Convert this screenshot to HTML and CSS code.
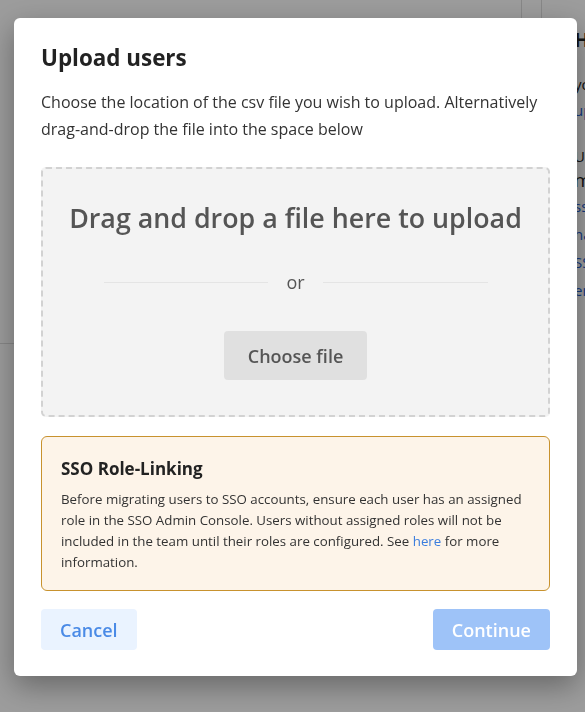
FILE: index.html
```html
<!DOCTYPE html>
<html lang="en">
<head>
<meta charset="UTF-8">
<meta name="viewport" content="width=device-width, initial-scale=1.0">
<title>Team members</title>
<link rel="stylesheet" href="styles.css">
</head>
<body>

<div class="page">
  <div class="panel panel-main"></div>
  <div class="panel panel-side">
    <h3 class="side-title">Help</h3>
    <p class="side-text">you need a template,</p>
    <a class="side-link" href="#">upload guide</a>
    <h4 class="side-sub">Useful links</h4>
    <p class="side-label">manage</p>
    <a class="side-link" href="#">sso setup</a>
    <a class="side-link" href="#">name rules</a>
    <a class="side-link" href="#">SSO console</a>
    <a class="side-link" href="#">errors</a>
  </div>
</div>

<div class="modal-overlay">
  <div class="modal">
    <h2 class="modal-title">Upload users</h2>
    <p class="modal-text">Choose the location of the csv file you wish to upload. Alternatively drag-and-drop the file into the space below</p>

    <div class="dropzone">
      <div class="dropzone-title">Drag and drop a file here to upload</div>
      <div class="divider">
        <span class="divider-line"></span>
        <span class="divider-text">or</span>
        <span class="divider-line"></span>
      </div>
      <button class="choose-button">Choose file</button>
    </div>

    <div class="notice">
      <div class="notice-title">SSO Role-Linking</div>
      <p class="notice-text">Before migrating users to SSO accounts, ensure each user has an assigned role in the SSO Admin Console. Users without assigned roles will not be included in the team until their roles are configured. See <a href="#">here</a> for more information.</p>
    </div>

    <div class="modal-footer">
      <button class="btn btn-cancel">Cancel</button>
      <button class="btn btn-continue" disabled>Continue</button>
    </div>
  </div>
</div>

</body>
</html>
```

FILE: styles.css
```css
body {
  margin: 0;
  font-family: "Open Sans", "Noto Sans", sans-serif;
  color: #222;
  background: #fff;
}

/* page behind the dialog */
.page {
  display: flex;
  align-items: flex-start;
  gap: 19px;
  height: 712px;
  overflow: hidden;
}

.panel-main {
  flex: 0 0 522px;
  height: 354px;
  margin-top: -10px;
  border-right: 1px solid #ddd;
  border-bottom: 1px solid #ddd;
  box-sizing: border-box;
}

.panel-side {
  flex: 0 0 300px;
  height: 330px;
  margin-top: -10px;
  padding: 36px 0 0 32px;
  border-left: 1px solid #ddd;
}

.side-title {
  margin: 0;
  font-size: 20px;
  line-height: 28px;
}

.side-text {
  margin: 18px 0 0;
  font-size: 15px;
  line-height: 24px;
}

.side-link {
  display: block;
  font-size: 15px;
  line-height: 28px;
  color: #1f5fd1;
  text-decoration: none;
}

.side-sub {
  margin: 20px 0 0;
  font-size: 15px;
  font-weight: 400;
  line-height: 24px;
}

.side-label {
  margin: 0;
  font-size: 19px;
  line-height: 24px;
}

/* dialog */
.modal-overlay {
  position: fixed;
  inset: 0;
  background: rgba(0, 0, 0, 0.39);
  display: flex;
  align-items: flex-start;
}

.modal {
  width: 563px;
  box-sizing: border-box;
  margin: 18px 0 0 14px;
  padding: 24px 27px 26px;
  background: #fff;
  border-radius: 6px;
  box-shadow: 0 10px 30px rgba(0, 0, 0, 0.35);
}

.modal-title {
  margin: 0;
  font-size: 22.4px;
  font-weight: 700;
  line-height: 32px;
  color: #222;
}

.modal-text {
  margin: 15px 0 0;
  font-size: 16px;
  line-height: 27px;
  color: #333;
}

.dropzone {
  display: flex;
  flex-direction: column;
  align-items: center;
  margin-top: 24px;
  padding: 31px 0 35px;
  background: #f3f3f3;
  border: 2px dashed #d2d2d2;
  border-radius: 5px;
}

.dropzone-title {
  font-size: 26.8px;
  font-weight: 600;
  line-height: 36px;
  color: #555;
}

.divider {
  display: flex;
  align-items: center;
  gap: 18px;
  width: 384px;
  margin-top: 34px;
}

.divider-line {
  flex: 1;
  height: 1px;
  background: #e4e4e4;
}

.divider-text {
  font-size: 18px;
  line-height: 24px;
  color: #555;
}

.choose-button {
  margin-top: 37px;
  height: 49px;
  padding: 0 24px;
  font-family: inherit;
  font-size: 18px;
  font-weight: 600;
  color: #555;
  background: #e0e0e0;
  border: none;
  border-radius: 4px;
  cursor: pointer;
}

.notice {
  margin-top: 19px;
  padding: 20px 19px 17px;
  background: #fdf4e9;
  border: 1px solid #c8922e;
  border-radius: 6px;
}

.notice-title {
  font-size: 17px;
  font-weight: 700;
  line-height: 24px;
  color: #222;
}

.notice-text {
  margin: 8px 0 0;
  font-size: 13.3px;
  line-height: 21px;
  color: #333;
}

.notice-text a {
  color: #3b7ddd;
  text-decoration: none;
}

.modal-footer {
  display: flex;
  justify-content: space-between;
  margin-top: 18px;
}

.btn {
  height: 41px;
  padding: 0 19px;
  font-family: inherit;
  font-size: 18px;
  font-weight: 600;
  border: none;
  border-radius: 4px;
  cursor: pointer;
}

.btn-cancel {
  background: #eaf3ff;
  color: #4a8ae6;
}

.btn-continue {
  background: #9ec3f8;
  color: #fff;
  cursor: default;
}
```
